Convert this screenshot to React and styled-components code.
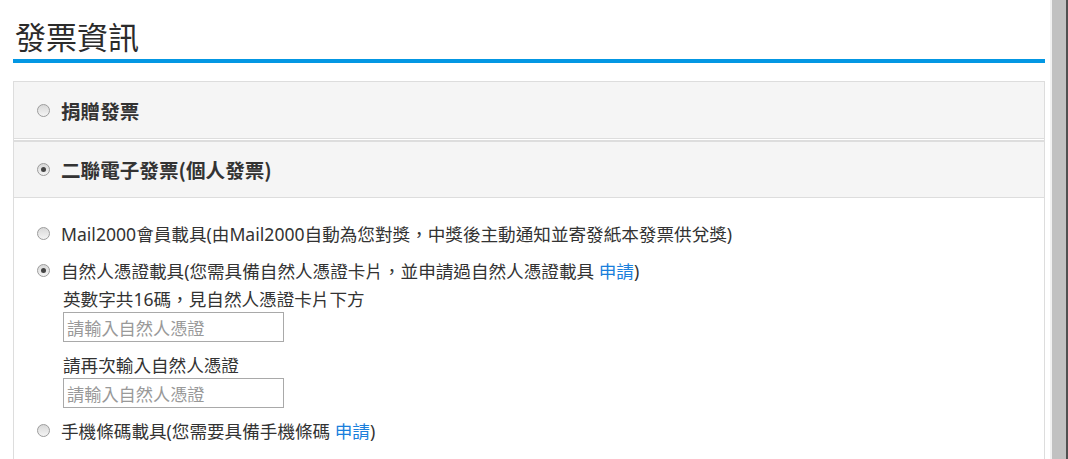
import styled, { createGlobalStyle } from "styled-components";

const GlobalStyle = createGlobalStyle`
  html, body {
    margin: 0;
    padding: 0;
    height: 100%;
    overflow: hidden;
    background: #fff;
  }
  body {
    font-family: "Noto Sans", "Noto Sans CJK TC", sans-serif;
    color: #333;
  }
`;

const Page = styled.div`
  display: flex;
  height: 100vh;
`;

const Main = styled.div`
  flex: 1;
  padding: 0 5px 0 13px;
  min-width: 0;
`;

const Title = styled.h2`
  margin: 20px 0 8px 2px;
  font-size: 31px;
  line-height: 31px;
  font-weight: 400;
  color: #2b2b2b;
  font-family: "Noto Sans CJK TC", sans-serif;
`;

const TitleBar = styled.div`
  height: 4px;
  background: #0397e3;
`;

const Panel = styled.div`
  margin-top: 18px;
  border: 1px solid #ddd;
  border-bottom: none;
  background: #fff;
`;

const Header = styled.div`
  display: flex;
  align-items: center;
  gap: 11px;
  height: ${(p) => (p.$first ? "56px" : "55px")};
  padding-left: 23px;
  background: #f5f5f5;
  border-bottom: 1px solid #ddd;
  border-top: ${(p) => (p.$first ? "none" : "2px solid #ddd")};
  margin-top: ${(p) => (p.$first ? "0" : "1px")};
  font-size: 19.6px;
  font-weight: 700;
  color: #333;
  font-family: "Noto Sans CJK TC", sans-serif;
`;

const Body = styled.div`
  padding: 22px 0 40px 23px;
`;

const Row = styled.div`
  display: flex;
  align-items: center;
  gap: 11px;
  height: 26px;
  margin-bottom: ${(p) => p.$mb || 11}px;
  font-size: 17.6px;
  white-space: nowrap;
`;

const Link = styled.a`
  color: #1a7fdc;
  text-decoration: none;
`;

const SubBlock = styled.div`
  padding-left: 26px;
  margin-top: -7px;
  margin-bottom: 9px;
`;

const SubLabel = styled.div`
  font-size: 17.6px;
  line-height: 24px;
  height: 24px;
  margin-top: ${(p) => p.$mt || 0}px;
`;

const TextInput = styled.input`
  display: block;
  box-sizing: border-box;
  width: 221px;
  height: 30px;
  margin-top: 1px;
  padding: 0 3px;
  border: 1px solid #a9a9a9;
  font-size: 17.2px;
  font-family: "Noto Sans CJK TC", sans-serif;
  color: #333;
  outline: none;
  &::placeholder {
    color: #999;
  }
`;

const RadioDot = styled.span`
  flex: none;
  box-sizing: border-box;
  width: 13px;
  height: 13px;
  border-radius: 50%;
  border: 1px solid #9c9c9c;
  background: linear-gradient(#d8d8d8, #f4f4f4);
  display: flex;
  align-items: center;
  justify-content: center;
  &::after {
    content: "";
    display: ${(p) => (p.$checked ? "block" : "none")};
    width: 5px;
    height: 5px;
    border-radius: 50%;
    background: #444;
  }
`;

const Scrollbar = styled.div`
  flex: none;
  width: 18px;
  display: flex;
  background: #f1f1f1;
`;

const Thumb = styled.div`
  margin-left: 2px;
  width: 14px;
  background: #c1c1c1;
`;

const Edge = styled.div`
  width: 2px;
  background: #505050;
`;

export default function App() {
  return (
    <Page>
      <GlobalStyle />
      <Main>
        <Title>發票資訊</Title>
        <TitleBar />
        <Panel>
          <Header $first>
            <RadioDot />
            捐贈發票
          </Header>
          <Header>
            <RadioDot $checked />
            二聯電子發票(個人發票)
          </Header>
          <Body>
            <Row>
              <RadioDot />
              <span>Mail2000會員載具(由Mail2000自動為您對獎，中獎後主動通知並寄發紙本發票供兌獎)</span>
            </Row>
            <Row>
              <RadioDot $checked />
              <span>
                自然人憑證載具(您需具備自然人憑證卡片，並申請過自然人憑證載具 <Link href="#">申請</Link>)
              </span>
            </Row>
            <SubBlock>
              <SubLabel>英數字共16碼，見自然人憑證卡片下方</SubLabel>
              <TextInput placeholder="請輸入自然人憑證" />
              <SubLabel $mt={11}>請再次輸入自然人憑證</SubLabel>
              <TextInput placeholder="請輸入自然人憑證" />
            </SubBlock>
            <Row>
              <RadioDot />
              <span>
                手機條碼載具(您需要具備手機條碼 <Link href="#">申請</Link>)
              </span>
            </Row>
          </Body>
        </Panel>
      </Main>
      <Scrollbar>
        <Thumb />
        <Edge />
      </Scrollbar>
    </Page>
  );
}
